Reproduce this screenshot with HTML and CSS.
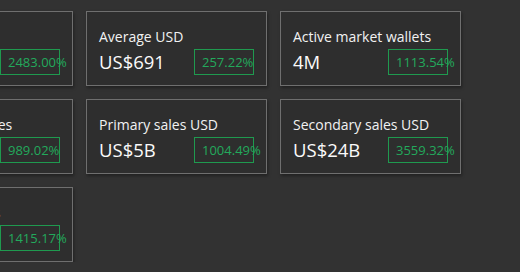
FILE: index.html
```html
<!DOCTYPE html>
<html lang="en">
<head>
    <meta charset="UTF-8">
    <meta name="viewport" content="width=device-width, initial-scale=1.0">
    <title>Market stats</title>
    <link rel="stylesheet" href="styles.css">
</head>
<body>
    <div class="stats">
        <div class="stat-card">
            <div class="stat-title">Volume USD</div>
            <div class="stat-row">
                <div class="stat-value">US$29B</div>
                <div class="stat-change">2483.00%</div>
            </div>
        </div>
        <div class="stat-card">
            <div class="stat-title">Average USD</div>
            <div class="stat-row">
                <div class="stat-value">US$691</div>
                <div class="stat-change">257.22%</div>
            </div>
        </div>
        <div class="stat-card">
            <div class="stat-title">Active market wallets</div>
            <div class="stat-row">
                <div class="stat-value">4M</div>
                <div class="stat-change">1113.54%</div>
            </div>
        </div>

        <div class="stat-card">
            <div class="stat-title">Number of sales</div>
            <div class="stat-row">
                <div class="stat-value">42M</div>
                <div class="stat-change">989.02%</div>
            </div>
        </div>
        <div class="stat-card">
            <div class="stat-title">Primary sales USD</div>
            <div class="stat-row">
                <div class="stat-value">US$5B</div>
                <div class="stat-change">1004.49%</div>
            </div>
        </div>
        <div class="stat-card">
            <div class="stat-title">Secondary sales USD</div>
            <div class="stat-row">
                <div class="stat-value">US$24B</div>
                <div class="stat-change">3559.32%</div>
            </div>
        </div>

        <div class="stat-card">
            <div class="stat-title">Unique buyers</div>
            <div class="stat-row">
                <div class="stat-value">6M</div>
                <div class="stat-change">1415.17%</div>
            </div>
        </div>
    </div>
</body>
</html>
```

FILE: styles.css
```css
body {
    margin: 0;
    background: #323232;
    font-family: "Open Sans", "Noto Sans", sans-serif;
    color: #f2f2f2;
    overflow: hidden;
}
.stats {
    display: grid;
    grid-template-columns: repeat(3, 181px);
    gap: 13px;
    margin: 11px 0 0 -108px;
}
.stat-card {
    height: 75px;
    box-sizing: border-box;
    padding: 15px 12px 10px 12px;
    background: #2e2e2e;
    border: 1px solid #6f6f6f;
    box-shadow: 1px 2px 3px rgba(0,0,0,0.35);
}
.stat-title {
    font-size: 14px;
    line-height: 20px;
    white-space: nowrap;
}
.stat-row {
    display: flex;
    justify-content: space-between;
    align-items: center;
    margin-top: 2px;
}
.stat-value {
    font-size: 18.5px;
    line-height: 26px;
    color: #fafafa;
}
.stat-change {
    width: 60px;
    height: 26px;
    box-sizing: border-box;
    padding-left: 7px;
    border: 1px solid #1f9a4f;
    color: #23a95c;
    font-size: 13px;
    line-height: 24px;
    white-space: nowrap;
}
```
